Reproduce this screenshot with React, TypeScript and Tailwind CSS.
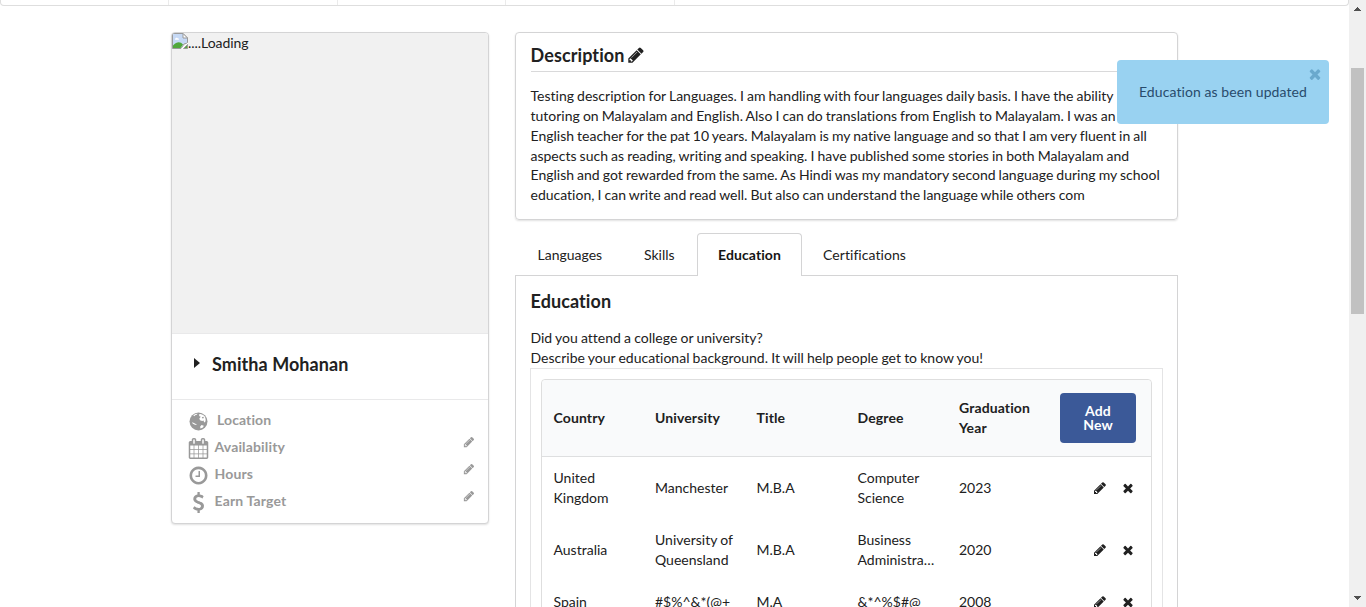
import React from "react";

type IconProps = { className?: string };

const PencilIcon = ({ className = "" }: IconProps) => (
  <svg viewBox="0 0 1792 1792" className={className} fill="currentColor">
    <path d="M491 1536l91-91-235-235-91 91v107h128v128h107zm523-928q0-22-22-22-10 0-17 7l-542 542q-7 7-7 17 0 22 22 22 10 0 17-7l542-542q7-7 7-17zm-54-192l416 416-832 832h-416v-416zm683 96q0 53-37 90l-166 166-416-416 166-165q36-38 90-38 53 0 91 38l235 234q37 39 37 91z" />
  </svg>
);

const CloseIcon = ({ className = "" }: IconProps) => (
  <svg viewBox="0 0 1792 1792" className={className} fill="currentColor">
    <path d="M1490 1322q0 40-28 68l-136 136q-28 28-68 28t-68-28l-294-294-294 294q-28 28-68 28t-68-28l-136-136q-28-28-28-68t28-68l294-294-294-294q-28-28-28-68t28-68l136-136q28-28 68-28t68 28l294 294 294-294q28-28 68-28t68 28l136 136q28 28 28 68t-28 68l-294 294 294 294q28 28 28 68z" />
  </svg>
);

const CalendarIcon = ({ className = "" }: IconProps) => (
  <svg viewBox="0 0 1792 1792" className={className} fill="currentColor">
    <path d="M192 1664h288v-288h-288v288zm352 0h320v-288h-320v288zm-352-352h288v-320h-288v320zm352 0h320v-320h-320v320zm-352-384h288v-288h-288v288zm736 736h320v-288h-320v288zm-384-736h320v-288h-320v288zm768 736h288v-288h-288v288zm-384-352h320v-320h-320v320zm-352-864v-288q0-13-9.500-22.500t-22.500-9.500h-64q-13 0-22.500 9.500t-9.500 22.500v288q0 13 9.500 22.500t22.500 9.500h64q13 0 22.500-9.500t9.500-22.500zm736 864h288v-320h-288v320zm-384-384h320v-288h-320v288zm384 0h288v-288h-288v288zm32-480v-288q0-13-9.500-22.500t-22.500-9.500h-64q-13 0-22.500 9.500t-9.500 22.500v288q0 13 9.500 22.500t22.500 9.500h64q13 0 22.500-9.500t9.500-22.500zm384-64v1280q0 52-38 90t-90 38h-1408q-52 0-90-38t-38-90v-1280q0-52 38-90t90-38h128v-96q0-66 47-113t113-47h64q66 0 113 47t47 113v96h384v-96q0-66 47-113t113-47h64q66 0 113 47t47 113v96h128q52 0 90 38t38 90z" />
  </svg>
);

const ClockIcon = ({ className = "" }: IconProps) => (
  <svg viewBox="0 0 1792 1792" className={className} fill="currentColor">
    <path d="M1024 544v448q0 14-9 23t-23 9h-320q-14 0-23-9t-9-23v-64q0-14 9-23t23-9h224v-352q0-14 9-23t23-9h64q14 0 23 9t9 23zm416 352q0-148-73-273t-198-198-273-73-273 73-198 198-73 273 73 273 198 198 273 73 273-73 198-198 73-273zm224 0q0 209-103 385.500t-279.500 279.500-385.500 103-385.500-103-279.500-279.500-103-385.500 103-385.500 279.500-279.500 385.500-103 385.500 103 279.500 279.500 103 385.500z" />
  </svg>
);

const DollarIcon = ({ className = "" }: IconProps) => (
  <svg viewBox="0 0 1792 1792" className={className} fill="currentColor">
    <path d="M1362 1185q0 153-99.500 263.500t-258.500 136.500v175q0 14-9 23t-23 9h-135q-13 0-22.500-9.500t-9.500-22.500v-175q-66-9-127.500-31t-101.500-44.500-74-48-46.500-37.500-17.500-18q-17-21-2-41l103-135q7-10 23-12 15-2 24 9l2 2q113 99 243 125 37 8 74 8 81 0 142.500-43t61.500-122q0-28-15-53t-33.500-42-58.500-37.500-66-32-80-32.500q-39-16-61.500-25t-61.500-26.500-62.500-31-56.500-35.500-53.500-42.500-43.500-49-35.500-58-21-66.500-8.500-78q0-138 98-242t255-134v-180q0-13 9.500-22.500t22.500-9.500h135q14 0 23 9t9 23v176q57 6 110.500 23t87 33.500 63.500 37.500 39 29 15 14q17 18 5 38l-81 146q-8 15-23 16-14 3-27-7-3-3-14.500-12t-39-26.500-58.500-32-74.500-26-85.500-11.500q-95 0-155 43t-60 111q0 26 8.500 48t29.500 41.500 39.500 33 56 31 60.500 27 70 27.500q53 20 81 31.500t76 35 75.500 42.500 62 50 53 63.500 31.500 76.500 13 94z" />
  </svg>
);

const GlobeIcon = ({ className = "" }: IconProps) => (
  <svg viewBox="0 0 21 21" className={className}>
    <circle cx="10.5" cy="10.5" r="9" fill="currentColor" />
    <path
      d="M5.300 4.300L7.600 2.900L9.600 2.700L8.800 3.700L7.200 4.300L6.300 5.300Z M10.800 3.400L12.600 2.900L15.200 3.900L17 5.800L17.700 8.400L17.500 10.300L16.700 11.600L16 10.900L15.600 9.600L14.200 10L12 9.300L11.300 7.400L12.800 5.800L11.500 5.300Z M4 11.200L6 12L7.300 12.700L8.600 13.200L8.300 14L6.300 13.600L4.600 12.600Z M12.200 15.600L13.600 14L15.800 14.700L15 16.500L12.400 17.600Z"
      fill="#fff"
    />
    <path d="M13.800 6.300L15.300 5.700L16 7L14.600 7.500Z" fill="currentColor" />
  </svg>
);

const BrokenImage = () => (
  <svg viewBox="0 0 16 16" className="h-4 w-4 shrink-0">
    <path d="M.5.5H11L15.500 5V10L12 11L9 15.500H.5Z" fill="#c6d9f5" stroke="#9a9a9a" />
    <path d="M11 .5V5H15.500Z" fill="#fff" stroke="#9a9a9a" />
    <path d="M3 6.500C3 4.800 5 4.300 5.500 5.200C7 5 7.500 6.500 6.500 6.700H3Z" fill="#fff" />
    <path d="M1 15V12.500C4 9 7 8.500 9 9.800L11 11.500L8.500 15Z" fill="#51a83c" />
    <path d="M9 16L16 9.500V11L11 16Z" fill="#fff" />
    <path d="M11.500 15.500L15.500 11.500V15.500Z" fill="#55ab40" stroke="#9a9a9a" />
  </svg>
);

const details = [
  { label: "Location", Icon: GlobeIcon, editable: false },
  { label: "Availability", Icon: CalendarIcon, editable: true },
  { label: "Hours", Icon: ClockIcon, editable: true },
  { label: "Earn Target", Icon: DollarIcon, editable: true },
];

const description = [
  "Testing description for Languages. I am handling with four languages daily basis. I have the ability",
  "tutoring on Malayalam and English. Also I can do translations from English to Malayalam. I was an",
  "English teacher for the pat 10 years. Malayalam is my native language and so that I am very fluent in all",
  "aspects such as reading, writing and speaking. I have published some stories in both Malayalam and",
  "English and got rewarded from the same. As Hindi was my mandatory second language during my school",
  "education, I can write and read well. But also can understand the language while others com",
];

const rows = [
  ["United Kingdom", "Manchester", "M.B.A", "Computer Science", "2023"],
  ["Australia", "University of Queensland", "M.B.A", "Business Administra…", "2020"],
  ["Spain", "#$%^&*(@+", "M.A", "&*^%$#@", "2008"],
];

function ProfileCard() {
  return (
    <section className="mt-[26px] ml-[171px] h-[492px] w-[318px] shrink-0 overflow-hidden rounded border border-[#d4d4d5] bg-white shadow-[0_1px_2px_rgba(0,0,0,0.12)]">
      <div className="flex h-[300px] items-start bg-[#f1f1f1]">
        <BrokenImage />
        <span className="leading-5 tracking-[-0.05px]">....Loading</span>
      </div>
      <div className="flex h-[67px] items-start border-y border-[#e9e9ea] pt-[19px] pl-[22px]">
        <svg viewBox="0 0 6 10" className="mt-[5px] mr-[12px] h-[10px] w-[6px]">
          <path d="M0 0L6 5L0 10Z" fill="#212121" />
        </svg>
        <h2 className="text-[18px] leading-[23px] font-bold tracking-[0.06px]">Smitha Mohanan</h2>
      </div>
      <ul className="pt-[6px] pr-[13px] pl-4 font-bold text-[#999]">
        {details.map(({ label, Icon, editable }) => (
          <li key={label} className="flex h-[27px] items-center">
            <Icon className="mt-[3px] h-[21px] w-[21px] shrink-0" />
            <span className={editable ? "ml-[5.500px] tracking-[0.15px]" : "ml-2 tracking-[0.1px]"}>{label}</span>
            {editable && <PencilIcon className="mb-[10px] ml-auto h-3 w-3" />}
          </li>
        ))}
      </ul>
    </section>
  );
}

function EducationTable() {
  return (
    <div className="-mx-[0.500px] h-[300px] border border-[#e4e4e5] p-[10px]">
      <div className="h-[300px] rounded border border-[#dedede]">
        <div className="grid h-[77px] grid-cols-[101.500px_101.500px_101px_101.500px_101.500px_101px] items-center rounded-t border-b border-[#dedfe0] bg-[#f9fafb] font-bold">
          {["Country", "University", "Title", "Degree", "Graduation Year"].map((h) => (
            <div key={h} className="pr-3 pl-[11.500px] leading-5 tracking-[0.12px]">{h}</div>
          ))}
          <button className="ml-[11px] h-[50px] w-[76px] rounded bg-[#3b5998] px-5 text-[14px] leading-[14px] font-bold tracking-[0.15px] text-white">
            Add New
          </button>
        </div>
        {rows.map((row) => (
          <div
            key={row[0]}
            className="grid min-h-[42px] grid-cols-[101.500px_101.500px_101px_101.500px_101.500px_101px] items-center py-[11px] leading-5 [word-spacing:-0.500px]"
          >
            {row.map((cell, i) => (
              <div key={i} className="pr-[9px] pl-[11.500px]">{cell}</div>
            ))}
            <div className="flex justify-end gap-[14px] pr-[15px]">
              <PencilIcon className="h-[14px] w-[14px]" />
              <CloseIcon className="h-[14px] w-[14px]" />
            </div>
          </div>
        ))}
      </div>
    </div>
  );
}

function Scrollbar() {
  return (
    <div className="flex w-[17px] shrink-0 flex-col items-center bg-[#f0f0f0] pt-[7px] pb-[7px]">
      <svg viewBox="0 0 7 4" className="h-1 w-[7px] shrink-0" shapeRendering="crispEdges">
        <path d="M0 4L3.500 0L7 4Z" fill="#505050" />
      </svg>
      <div className="mt-[57px] h-[246px] w-[13px] shrink-0 bg-[#c1c1c1]" />
      <svg viewBox="0 0 7 4" className="mt-auto h-1 w-[7px] shrink-0" shapeRendering="crispEdges">
        <path d="M0 0L3.500 4L7 0Z" fill="#505050" />
      </svg>
    </div>
  );
}

export default function App() {
  return (
    <div className="relative flex h-[607px] overflow-hidden bg-white font-['Lato',sans-serif] text-[14px] leading-[19.800px] text-[#212121] [font-variant-ligatures:none]">
      <main className="h-[607px] w-[1349px] shrink-0 overflow-hidden">
        <div className="flex h-[6px] rounded-b border border-t-0 border-[#dedede]">
          <div className="w-[168px] border-r border-[#ebebeb]" />
          <div className="w-[169px] border-r border-[#ebebeb]" />
          <div className="w-[168px] border-r border-[#ebebeb]" />
          <div className="w-[169px] border-r border-[#ebebeb]" />
        </div>
        <div className="flex items-start">
          <ProfileCard />
          <div className="mt-[26px] ml-[26px] w-[663px] shrink-0">
            <section className="h-[188px] rounded border border-[#d4d4d5] px-[14.500px] pt-[11px] shadow-[0_1px_2px_rgba(0,0,0,0.12)]">
              <h3 className="flex h-[28px] items-start border-b border-[#d9d9da] text-[18px] leading-[23px] font-bold tracking-[0.1px]">
                Description
                <PencilIcon className="mt-[2px] ml-[2px] h-[18px] w-[18px]" />
              </h3>
              <div className="mt-[14.300px] whitespace-nowrap [word-spacing:-0.500px]">
                {description.map((line) => (
                  <div key={line}>{line}</div>
                ))}
              </div>
            </section>
            <nav className="mt-[13px] flex h-[43px] leading-5">
              <div className="w-[182px] border-b border-[#d4d4d5] pt-3">
                <div className="flex">
                  <span className="ml-[22.500px] w-[106.500px]">Languages</span>
                  <span>Skills</span>
                </div>
              </div>
              <div className="w-[105px] rounded-t border border-b-0 border-[#d4d4d5] pt-[11px] text-center font-bold tracking-[0.1px] text-[#151515]">
                Education
              </div>
              <div className="flex-1 border-b border-[#d4d4d5] pt-3 pl-[21px] tracking-[0.06px]">Certifications</div>
            </nav>
            <section className="h-[350px] border-x border-[#d4d4d5] px-[14.500px] pt-[14px]">
              <h3 className="text-[18px] leading-[23px] font-bold tracking-[0.1px]">Education</h3>
              <p className="mt-[15px] leading-5 [word-spacing:-0.400px]">
                Did you attend a college or university?
                <br />
                Describe your educational background. It will help people get to know you!
              </p>
              <EducationTable />
            </section>
          </div>
        </div>
      </main>
      <Scrollbar />
      <aside className="absolute top-[60px] left-[1117px] h-16 w-[212px] rounded bg-[#99d2f1] pt-[22px] pl-[22px] tracking-[0.08px] text-[#284b6c]">
        Education as been updated
        <CloseIcon className="absolute top-[6px] right-[6px] h-4 w-4 text-[#6aa9cd]" />
      </aside>
    </div>
  );
}
